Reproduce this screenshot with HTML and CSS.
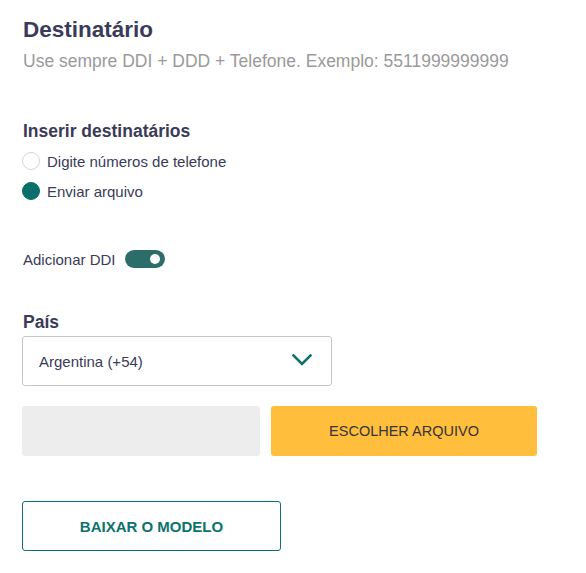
FILE: index.html
```html
<!DOCTYPE html>
<html lang="pt">
<head>
<meta charset="utf-8">
<link rel="stylesheet" href="styles.css">
</head>
<body>
<div class="page">
  <h1 class="title">Destinatário</h1>
  <p class="subtitle">Use sempre DDI + DDD + Telefone. Exemplo: 5511999999999</p>

  <h2 class="label label-insert">Inserir destinatários</h2>
  <div class="radios">
    <div class="radio-row"><span class="radio"></span><span class="radio-text">Digite números de telefone</span></div>
    <div class="radio-row"><span class="radio radio-on"></span><span class="radio-text">Enviar arquivo</span></div>
  </div>

  <div class="toggle-row">
    <span class="toggle-text">Adicionar DDI</span>
    <span class="toggle"><span class="knob"></span></span>
  </div>

  <h2 class="label label-pais">País</h2>
  <div class="select">
    <span class="select-text">Argentina (+54)</span>
    <svg class="chevron" width="20" height="12" viewBox="0 0 20 12"><path d="M1.5 1.5 L10 10 L18.5 1.5" fill="none" stroke="#0c726e" stroke-width="2.6" stroke-linecap="square"/></svg>
  </div>

  <div class="file-row">
    <div class="file-field"></div>
    <div class="file-btn">ESCOLHER ARQUIVO</div>
  </div>

  <div class="download">BAIXAR O MODELO</div>
</div>
</body>
</html>
```
FILE: styles.css
```css
* { box-sizing: border-box; }
html, body { margin: 0; padding: 0; background: #fff; }
body { font-family: "Liberation Sans", Arial, sans-serif; }
.page { padding: 18px 22px 0 22px; display: flex; flex-direction: column; align-items: flex-start; }
.title { margin: 0 0 0 1px; font-size: 22.5px; line-height: 24px; font-weight: bold; color: #3a3b58; }
.subtitle { margin: 9px 0 0 1px; font-size: 17.5px; line-height: 20px; color: #9a9a9a; }
.label { margin: 0 0 0 1px; font-size: 17.5px; line-height: 20px; font-weight: bold; color: #3a3b58; }
.label-insert { margin-top: 50px; }
.radios { display: flex; flex-direction: column; gap: 12px; margin-top: 11px; }
.radio-row { display: flex; align-items: center; gap: 7px; height: 18px; }
.radio { width: 18px; height: 18px; border-radius: 50%; border: 1px solid #d6d6d6; background: #fff; }
.radio-on { background: #086f6b; border-color: #086f6b; }
.radio-text { font-size: 15px; color: #3a3b58; }
.toggle-row { display: flex; align-items: center; gap: 9px; margin-top: 50px; margin-left: 1px; }
.toggle-text { font-size: 15px; color: #3a3b58; }
.toggle { width: 40px; height: 18px; border-radius: 9px; background: #2c6d6a; display: flex; align-items: center; justify-content: flex-end; padding-right: 5px; }
.knob { width: 10px; height: 10px; border-radius: 50%; background: #fff; }
.label-pais { margin-top: 44px; }
.select { margin-top: 4px; width: 310px; height: 50px; border: 1px solid #c6c6c6; border-radius: 3px; display: flex; align-items: center; justify-content: space-between; padding: 0 19px 0 16px; }
.select-text { font-size: 15px; color: #3a3b58; }
.chevron { display: block; margin-top: -2px; }
.file-row { display: flex; gap: 11px; margin-top: 20px; }
.file-field { width: 238px; height: 50px; background: #ededed; border-radius: 3px; }
.file-btn { width: 266px; height: 50px; background: #ffbe3b; border-radius: 3px; display: flex; align-items: center; justify-content: center; font-size: 14.5px; color: #34343a; }
.download { margin-top: 45px; width: 259px; height: 50px; border: 1.5px solid #0c726e; border-radius: 3px; display: flex; align-items: center; justify-content: center; font-size: 15px; font-weight: bold; color: #0c726e; }
```
